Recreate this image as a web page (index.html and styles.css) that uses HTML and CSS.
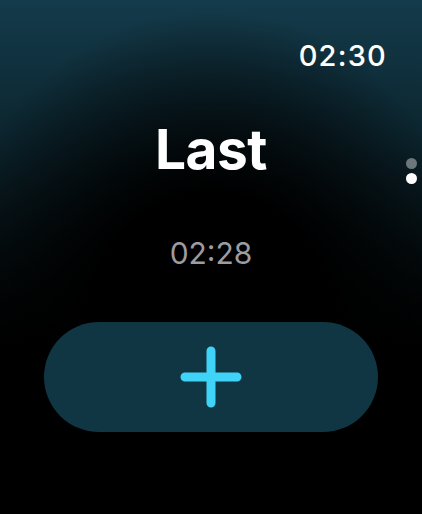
FILE: index.html
```html
<!DOCTYPE html>
<html lang="en">
<head>
    <meta charset="UTF-8">
    <meta name="viewport" content="width=device-width, initial-scale=1.0">
    <title>Last</title>
    <link rel="stylesheet" href="styles.css">
</head>
<body>
    <div class="screen">
        <div class="status-bar">
            <span class="clock">02:30</span>
        </div>

        <div class="content">
            <h1 class="title">Last</h1>
            <div class="last-time">02:28</div>
            <button class="add-button" aria-label="Add">
                <svg width="62" height="62" viewBox="0 0 62 62">
                    <path d="M31 5 V57 M5 31 H57" stroke="#3fd3f8" stroke-width="9" stroke-linecap="round" fill="none"/>
                </svg>
            </button>
        </div>

        <!-- page indicator -->
        <div class="page-dots">
            <span class="dot"></span>
            <span class="dot active"></span>
        </div>
    </div>
</body>
</html>
```

FILE: styles.css
```css
html, body {
    margin: 0;
    padding: 0;
    background: #000;
}
body {
    font-family: Inter, "Noto Sans", sans-serif;
    color: #fff;
}
.screen {
    position: relative;
    width: 422px;
    height: 514px;
    overflow: hidden;
    background:
        radial-gradient(ellipse 280px 330px at 50% 340px, #000 45%, rgba(0, 0, 0, 0) 100%),
        linear-gradient(180deg, #143b4b 0px, #0b232c 150px, #030809 290px, #000 340px);
}
.status-bar {
    display: flex;
    justify-content: flex-end;
    padding: 38px 35px 0 0;
    height: 40px;
}
.clock {
    font-size: 29px;
    font-weight: 500;
    letter-spacing: 1.2px;
    line-height: 36px;
}
.content {
    display: flex;
    flex-direction: column;
    align-items: center;
}
.title {
    margin: 38px 0 0 0;
    font-size: 55px;
    font-weight: 700;
    line-height: 66px;
    letter-spacing: -0.5px;
}
.last-time {
    margin-top: 53px;
    font-size: 30px;
    font-weight: 400;
    line-height: 36px;
    color: #9c9ca2;
}
.add-button {
    margin-top: 51px;
    width: 334px;
    height: 110px;
    border: none;
    border-radius: 55px;
    background-color: #0f3642;
    display: flex;
    align-items: center;
    justify-content: center;
    padding: 0;
}
.page-dots {
    position: absolute;
    right: 5px;
    top: 158px;
    display: flex;
    flex-direction: column;
    gap: 4px;
}
.dot {
    width: 11px;
    height: 11px;
    border-radius: 50%;
    background-color: #6c777b;
}
.dot.active {
    background-color: #fff;
}
```
